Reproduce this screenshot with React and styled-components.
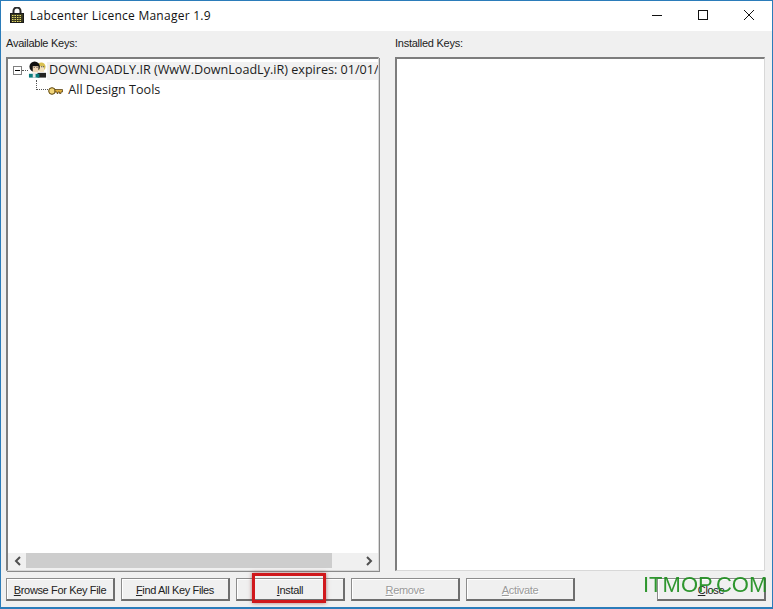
import React from 'react';
import styled, { createGlobalStyle } from 'styled-components';

const GlobalStyles = createGlobalStyle`
  html, body {
    margin: 0;
    padding: 0;
    background: #f0f0f0;
  }
  * {
    box-sizing: border-box;
  }
`;

const Window = styled.div`
  position: relative;
  width: 773px;
  height: 609px;
  display: flex;
  flex-direction: column;
  overflow: hidden;
  background: #f0f0f0;
  border: 1px solid #2b7cba;
  border-bottom-width: 2px;
  font-family: 'Liberation Sans', Arial, sans-serif;
`;

const TitleBar = styled.div`
  height: 30px;
  flex: none;
  display: flex;
  align-items: center;
  background: #ffffff;
  padding: 0 0 2px 9px;
`;

const AppIcon = styled.svg`
  width: 14px;
  height: 16px;
  flex: none;
`;

const Title = styled.div`
  margin-left: 6px;
  font-family: 'Open Sans', 'Noto Sans', sans-serif;
  font-size: 12px;
  letter-spacing: 0.25px;
  color: #111111;
  flex: 1;
`;

const WindowControl = styled.div`
  width: 46px;
  height: 28px;
  display: flex;
  align-items: center;
  justify-content: center;
`;

const Panels = styled.div`
  flex: 1;
  display: grid;
  grid-template-columns: 373px 370px;
  column-gap: 16px;
  padding: 0 5px;
  min-height: 0;
`;

const PanelColumn = styled.div`
  display: flex;
  flex-direction: column;
  min-height: 0;
`;

const PanelLabel = styled.div`
  height: 26px;
  flex: none;
  display: flex;
  align-items: center;
  padding-bottom: 2px;
  font-size: 11px;
  letter-spacing: -0.25px;
  color: #222222;
`;

const ListBox = styled.div`
  flex: 1;
  display: flex;
  flex-direction: column;
  min-height: 0;
  background: #ffffff;
  border-style: solid;
  border-width: 2px 1px 1px 2px;
  border-color: #7d7d7d #d8d8d8 #d8d8d8 #7d7d7d;
  box-shadow: ${(p) => (p.$thin ? 'none' : '1px 1px 0 #8a8a8a')};
`;

const TreeArea = styled.div`
  flex: 1;
  padding: 1px 0 0 5px;
  overflow: hidden;
  font-family: 'Open Sans', 'Noto Sans', sans-serif;
  font-size: 12.6px;
  color: #1c1c1c;
`;

const TreeRow = styled.div`
  position: relative;
  height: 20px;
  display: flex;
  align-items: center;
  white-space: nowrap;
  padding-left: ${(p) => p.$indent || 0}px;
`;

const RowText = styled.span`
  height: 18px;
  line-height: 15px;
  flex: 1;
  align-self: flex-end;
  padding-left: 2px;
  background: ${(p) => (p.$selected ? '#f1f1f1' : 'transparent')};
`;

const Expander = styled.div`
  width: 9px;
  height: 9px;
  flex: none;
  margin-top: 1px;
  border: 1px solid #808080;
  background: #ffffff;
  display: flex;
  align-items: center;
  justify-content: center;

  &::after {
    content: '';
    width: 5px;
    height: 1px;
    background: #000000;
  }
`;

const Stub = styled.div`
  width: 6px;
  flex: none;
  border-top: 1px dotted #555555;
`;

const Connector = styled.div`
  position: absolute;
  left: 23px;
  top: 0;
  width: 12px;
  height: 10px;
  border-left: 1px dotted #555555;
  border-bottom: 1px dotted #555555;
`;

const ScrollBar = styled.div`
  height: 17px;
  flex: none;
  display: flex;
  align-items: stretch;
  padding-bottom: 2px;
  background: #f0f0f0;
`;

const ScrollArrow = styled.div`
  width: 18px;
  flex: none;
  display: flex;
  align-items: center;
  justify-content: center;
`;

const ScrollTrack = styled.div`
  flex: 1;
  display: flex;
`;

const ScrollThumb = styled.div`
  width: 306px;
  background: #cdcdcd;
`;

const ButtonRow = styled.div`
  height: 36px;
  flex: none;
  display: flex;
  gap: 6px;
  padding: 7px 6px 0 5px;
`;

const Button = styled.div`
  width: 109px;
  height: 23px;
  display: flex;
  align-items: center;
  justify-content: center;
  padding-top: 2px;
  font-size: 11px;
  letter-spacing: -0.35px;
  color: ${(p) => (p.$disabled ? '#9a9a9a' : '#222222')};
  text-shadow: ${(p) => (p.$disabled ? '1px 1px 0 #ffffff' : 'none')};
  background: #f0f0f0;
  border-style: solid;
  border-width: 1px 2px 2px 1px;
  border-color: #8c8c8c #6e6e6e #6e6e6e #8c8c8c;
  box-shadow: inset 1px 1px 0 #ffffff;
  margin-left: ${(p) => (p.$pushed ? 'auto' : '0')};
`;

const Highlight = styled.div`
  position: absolute;
  left: 251px;
  top: 572px;
  width: 74px;
  height: 30px;
  border: 3px solid #d0181c;
  box-shadow: 0 0 4px rgba(120, 40, 40, 0.6);
`;

const Watermark = styled.div`
  position: absolute;
  left: 642px;
  top: 571px;
  font-family: 'Liberation Sans', Arial, sans-serif;
  font-size: 22px;
  color: #1f8f1f;
  white-space: nowrap;
  opacity: 0.92;
`;

function LockIcon() {
  return (
    <AppIcon viewBox="0 0 14 16">
      <path d="M3.500 7V4a3.500 3.500 0 0 1 7 0v3" fill="none" stroke="#2a2a2a" strokeWidth="2" />
      <rect x="0.500" y="6.500" width="13" height="9" fill="#3a3a20" stroke="#1a1a1a" />
      <path d="M2 8.500h10M2 10.500h10M2 12.500h10M2 14.500h10" stroke="#e4d868" strokeDasharray="1.500 1" />
    </AppIcon>
  );
}

function UsersIcon() {
  return (
    <svg width="19" height="18" viewBox="0 0 20 18" style={{ flex: 'none' }}>
      <circle cx="14" cy="5.500" r="4.500" fill="#d8c050" />
      <path d="M10 12h9v5h-9z" fill="#222" />
      <path d="M12 5h5v6h-5z" fill="#f2e2c0" />
      <path d="M14 5h1v1h-1zM16 5h1v1h-1z" fill="#222" />
      <circle cx="7" cy="5.500" r="5.500" fill="#111" />
      <path d="M5 5h6v6.500H5z" fill="#f2d8b8" />
      <path d="M6 6h1v1H6zM9 6h1v1H9z" fill="#111" />
      <path d="M1 13h11v4H1z" fill="#0b7c7c" />
      <path d="M5 12h3v5H5z" fill="#e8e8e8" />
    </svg>
  );
}

function KeyIcon() {
  return (
    <svg width="15" height="10" viewBox="0 0 15 10" style={{ flex: 'none', marginTop: 1 }}>
      <circle cx="4" cy="5" r="3.300" fill="#f2d67a" stroke="#5a4208" />
      <path d="M7 3.500h7.500v2.500h-1.500v1.500h-1.500v-1.500h-1.500v1.500H9V6H7z" fill="#e0b040" stroke="#4a3408" strokeWidth="0.700" />
    </svg>
  );
}

function Chevron({ left }) {
  return (
    <svg width="7" height="10" viewBox="0 0 7 10">
      <path d={left ? 'M6 1L2 5l4 4' : 'M1 1l4 4-4 4'} fill="none" stroke="#505050" strokeWidth="2" />
    </svg>
  );
}

function App() {
  return (
    <Window>
      <GlobalStyles />
      <TitleBar>
        <LockIcon />
        <Title>Labcenter Licence Manager 1.9</Title>
        <WindowControl>
          <svg width="10" height="10"><path d="M0 5.500h10" stroke="#111" /></svg>
        </WindowControl>
        <WindowControl>
          <svg width="10" height="10"><rect x="0.500" y="0.500" width="9" height="9" fill="none" stroke="#111" /></svg>
        </WindowControl>
        <WindowControl>
          <svg width="10" height="10"><path d="M0 0l10 10M10 0L0 10" stroke="#111" /></svg>
        </WindowControl>
      </TitleBar>
      <Panels>
        <PanelColumn>
          <PanelLabel>Available Keys:</PanelLabel>
          <ListBox>
            <TreeArea>
              <TreeRow>
                <Expander />
                <Stub />
                <UsersIcon />
                <RowText $selected>DOWNLOADLY.IR (WwW.DownLoadLy.iR) expires: 01/01/</RowText>
              </TreeRow>
              <TreeRow $indent={35}>
                <Connector />
                <KeyIcon />
                <RowText>&nbsp;All Design Tools</RowText>
              </TreeRow>
            </TreeArea>
            <ScrollBar>
              <ScrollArrow><Chevron left /></ScrollArrow>
              <ScrollTrack><ScrollThumb /></ScrollTrack>
              <ScrollArrow><Chevron /></ScrollArrow>
            </ScrollBar>
          </ListBox>
        </PanelColumn>
        <PanelColumn>
          <PanelLabel>Installed Keys:</PanelLabel>
          <ListBox $thin />
        </PanelColumn>
      </Panels>
      <ButtonRow>
        <Button><span><u>B</u>rowse For Key File</span></Button>
        <Button><span><u>F</u>ind All Key Files</span></Button>
        <Button><span><u>I</u>nstall</span></Button>
        <Button $disabled><span><u>R</u>emove</span></Button>
        <Button $disabled><span><u>A</u>ctivate</span></Button>
        <Button $pushed><span><u>C</u>lose</span></Button>
      </ButtonRow>
      <Highlight />
      <Watermark>ITMOP.COM</Watermark>
    </Window>
  );
}

export default App;
